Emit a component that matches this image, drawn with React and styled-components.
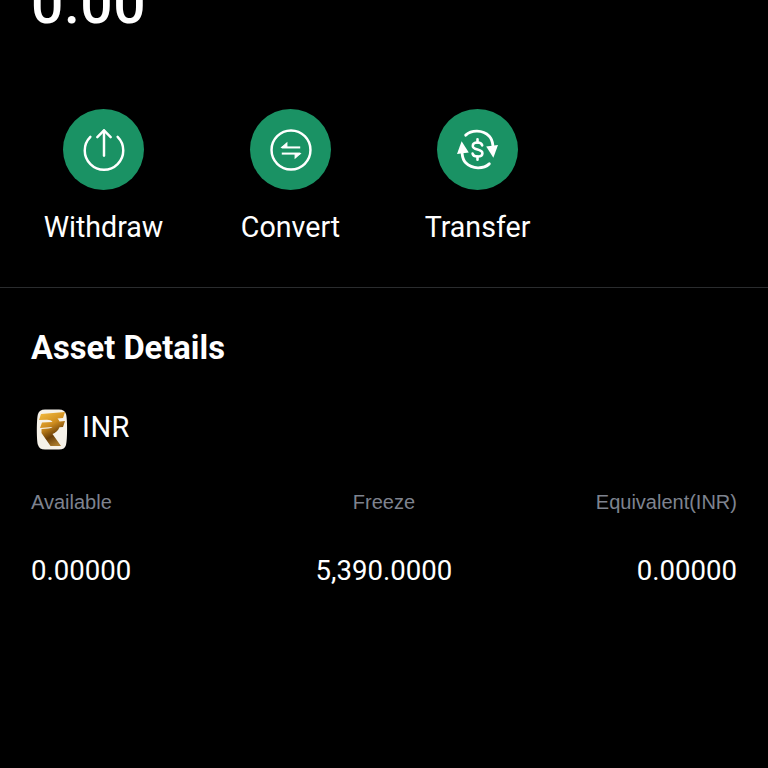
import React from 'react';
import styled, { createGlobalStyle } from 'styled-components';

const GlobalStyle = createGlobalStyle`
  html, body {
    margin: 0;
    padding: 0;
    background: #000;
  }
`;

const TransferHalf = ({ flip }) => (
  <g transform={flip ? 'rotate(180 20 20)' : undefined}>
    <path d="M8.5 6C14 .8 25 .5 31.5 7C33.5 9 34.6 12 35 16" fill="none" strokeLinecap="round" />
    <path d="M28.5 17L40 15.5L35.5 28Z" fill="#fff" stroke="none" />
  </g>
);

const actions = [
  {
    label: 'Withdraw',
    icon: (
      <svg width="42" height="42" viewBox="0 0 41 41" fill="none" stroke="#fff" strokeWidth="2.4" strokeLinecap="round" strokeLinejoin="round">
        <path d="M7.2 7.6A18.8 18.8 0 1 0 33.8 7.6" />
        <path d="M20.5 26V1.4" />
        <path d="M14 7.9L20.5 1.4L27 7.9" />
      </svg>
    ),
  },
  {
    label: 'Convert',
    icon: (
      <svg width="42" height="42" viewBox="0 0 41 41" fill="none" stroke="#fff" strokeWidth="2.4">
        <circle cx="20.5" cy="20.5" r="19" />
        <path d="M11.5 18H29.5" strokeWidth="2" />
        <path d="M11.5 18L16.5 13.5V18Z" fill="#fff" strokeWidth="1" />
        <path d="M11.5 24H29.5" strokeWidth="2" />
        <path d="M29.5 24L24.5 28.5V24Z" fill="#fff" strokeWidth="1" />
      </svg>
    ),
  },
  {
    label: 'Transfer',
    icon: (
      <svg width="41" height="41" viewBox="0 0 40 40" fill="none" stroke="#fff" strokeWidth="2.8">
        <TransferHalf />
        <TransferHalf flip />
        <path d="M24.6 16C24.2 14.2 22.4 13.2 20 13.2C17.2 13.2 15.4 14.6 15.4 16.5C15.4 21 24.8 19 24.8 23.6C24.8 25.6 22.8 26.8 20 26.8C17.4 26.8 15.6 25.7 15.2 24" strokeWidth="2.5" strokeLinecap="round" />
        <path d="M20 10V13.2M20 26.8V30" strokeWidth="2.5" strokeLinecap="round" />
      </svg>
    ),
  },
];

const columns = [
  { label: 'Available', value: '0.00000', align: 'left' },
  { label: 'Freeze', value: '5,390.0000', align: 'center' },
  { label: 'Equivalent(INR)', value: '0.00000', align: 'right' },
];

const CoinIcon = () => (
  <svg width="32" height="41" viewBox="0 0 32 41">
    <defs>
      <linearGradient id="gold" x1="0.2" y1="0" x2="0.6" y2="1">
        <stop offset="0" stopColor="#f0b93e" />
        <stop offset="0.4" stopColor="#cf8d1f" />
        <stop offset="0.72" stopColor="#6b3f08" />
        <stop offset="1" stopColor="#a97a2c" />
      </linearGradient>
    </defs>
    <path d="M9 .5H23C27 .5 29 2 30 5C31.5 9 31.5 32 30 36C29 39 27 40.5 23 40.5H9C5 40.5 3 39 2 36C.5 32 .5 9 2 5C3 2 5 .5 9 .5Z" fill="#f6f2e9" />
    <path d="M5 5L29 3L27 9L21.5 9.5C22.5 10.5 23.2 11.5 23.5 12.5L29 12L27 18L23.5 18.3C22 22 19.5 24 16.5 25L25 37H14.5L5.5 24V20L12 19.5C14.5 19.3 15.8 18.7 16.5 18L4 19L6 13.5L16.5 13C15.5 11.5 14 10.7 11 10.7L3 11Z" fill="url(#gold)" />
  </svg>
);

const App = () => {
  return (
    <Page>
      <GlobalStyle />
      <Balance>0.00</Balance>
      <ActionRow>
        {actions.map((a) => (
          <Action key={a.label}>
            <IconCircle>{a.icon}</IconCircle>
            <ActionLabel>{a.label}</ActionLabel>
          </Action>
        ))}
      </ActionRow>
      <Divider />
      <Details>
        <Title>Asset Details</Title>
        <Currency>
          <CoinIcon />
          <CurrencyName>INR</CurrencyName>
        </Currency>
        <Table>
          {columns.map((c) => (
            <ColumnLabel key={c.label} $align={c.align}>{c.label}</ColumnLabel>
          ))}
          {columns.map((c) => (
            <ColumnValue key={c.label} $align={c.align}>{c.value}</ColumnValue>
          ))}
        </Table>
      </Details>
    </Page>
  );
};

export default App;

const Page = styled.div`
  width: 768px;
  height: 768px;
  overflow: hidden;
  background: #000;
  color: #fff;
  font-family: Roboto, "Liberation Sans", sans-serif;
`;

const Balance = styled.div`
  margin: -26px 0 0 31px;
  height: 135px;
  font-size: 57px;
  font-weight: 500;
  line-height: 60px;
  letter-spacing: 0.5px;
`;

const ActionRow = styled.div`
  display: flex;
  padding-left: 10px;
  height: 178px;
`;

const Action = styled.div`
  width: 187px;
  display: flex;
  flex-direction: column;
  align-items: center;
`;

const IconCircle = styled.div`
  width: 81px;
  height: 81px;
  border-radius: 50%;
  background: #1a9264;
  display: flex;
  align-items: center;
  justify-content: center;
`;

const ActionLabel = styled.div`
  margin-top: 19px;
  font-size: 28.6px;
  line-height: 36px;
  white-space: nowrap;
`;

const Divider = styled.div`
  height: 1px;
  background: #2a2c2e;
`;

const Details = styled.div`
  padding: 41px 31px 0;
`;

const Title = styled.div`
  font-size: 32.7px;
  font-weight: 700;
  line-height: 38px;
`;

const Currency = styled.div`
  display: flex;
  align-items: center;
  gap: 14px;
  margin-top: 42px;
  padding-left: 5px;
`;

const CurrencyName = styled.div`
  font-size: 29px;
  line-height: 36px;
  letter-spacing: 0.5px;
  margin-bottom: 5px;
`;

const Table = styled.div`
  display: grid;
  grid-template-columns: 1fr 1fr 1fr;
  row-gap: 40px;
  margin-top: 40px;
`;

const ColumnLabel = styled.div`
  font-family: "Liberation Sans", Arial, sans-serif;
  font-size: 20px;
  line-height: 24px;
  color: #7e838f;
  text-align: ${(p) => p.$align};
`;

const ColumnValue = styled.div`
  font-size: 27.6px;
  line-height: 34px;
  white-space: nowrap;
  text-align: ${(p) => p.$align};
`;
